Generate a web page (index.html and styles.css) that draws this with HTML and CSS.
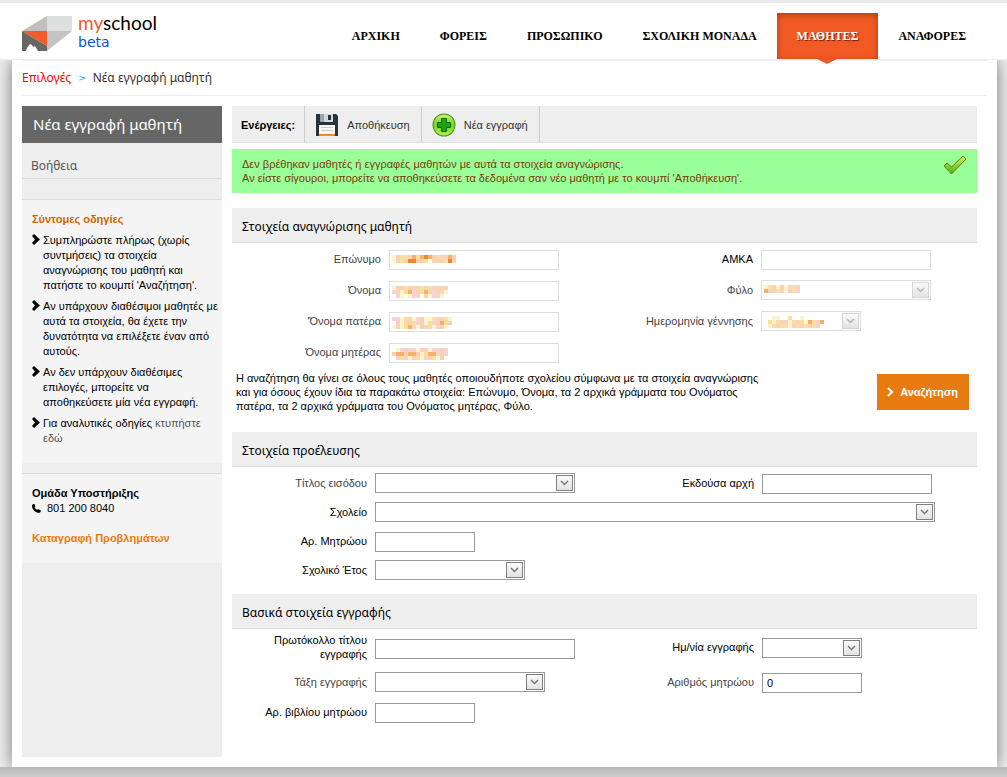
FILE: index.html
```html
<!DOCTYPE html>
<html lang="el">
<head>
<meta charset="utf-8">
<title>myschool – Νέα εγγραφή μαθητή</title>
<link rel="stylesheet" href="styles.css">
</head>
<body>
<svg class="defs" aria-hidden="true">
  <symbol id="chevron" viewBox="0 0 15 14"><path fill="none" stroke="currentColor" stroke-width="1.500" d="M4 5l3.500 3.500L11 5"/></symbol>
  <symbol id="arrow" viewBox="0 0 8 11"><path d="M0 2l2-2 6 5.500-6 5.500-2-2 3-3.500z"/></symbol>
  <symbol id="thin-arrow" viewBox="0 0 7 10"><path fill="none" stroke="currentColor" stroke-width="2" d="M1 1l4 4-4 4"/></symbol>
</svg>

<header class="top">
  <a class="logo" href="#" aria-label="myschool beta">
    <svg class="logo-mark" viewBox="0 0 50 36" aria-hidden="true">
      <path fill="#dedfdf" d="M25 0h25v15H25z"/>
      <path fill="#bdbebd" d="M0 15L25 0v15z"/>
      <path fill="#c2c3c2" d="M25 15h25L25 35z"/>
      <path fill="#f15a29" d="M0 15h25v15z"/>
      <path fill="#666" d="M0 15l25 15v5H0z"/>
      <path fill="#fff" d="M4 35l1-3 3-4 2 1 1 2 2-1 3 5z"/>
    </svg>
    <span class="logo-text"><span class="logo-name"><b>my</b>school</span><span class="logo-beta">beta</span></span>
  </a>
  <nav class="nav">
    <a href="#">ΑΡΧΙΚΗ</a>
    <a href="#">ΦΟΡΕΙΣ</a>
    <a href="#">ΠΡΟΣΩΠΙΚΟ</a>
    <a href="#">ΣΧΟΛΙΚΗ ΜΟΝΑΔΑ</a>
    <a href="#" class="active">ΜΑΘΗΤΕΣ</a>
    <a href="#">ΑΝΑΦΟΡΕΣ</a>
  </nav>
</header>

<div class="page">
  <nav class="crumbs"><a href="#">Επιλογές</a><i>&gt;</i><span>Νέα εγγραφή μαθητή</span></nav>
  <div class="columns">
    <aside class="side">
      <h1>Νέα εγγραφή μαθητή</h1>
      <a class="help" href="#">Βοήθεια</a>
      <div class="spacer"></div>
      <section class="tips">
        <h2>Σύντομες οδηγίες</h2>
        <ul>
          <li><svg><use href="#arrow"/></svg><span>Συμπληρώστε πλήρως (χωρίς συντμήσεις) τα στοιχεία αναγνώρισης του μαθητή και πατήστε το κουμπί 'Αναζήτηση'.</span></li>
          <li><svg><use href="#arrow"/></svg><span>Αν υπάρχουν διαθέσιμοι μαθητές με αυτά τα στοιχεία, θα έχετε την δυνατότητα να επιλέξετε έναν από αυτούς.</span></li>
          <li><svg><use href="#arrow"/></svg><span>Αν δεν υπάρχουν διαθέσιμες επιλογές, μπορείτε να αποθηκεύσετε μία νέα εγγραφή.</span></li>
          <li><svg><use href="#arrow"/></svg><span>Για αναλυτικές οδηγίες <a href="#">κτυπήστε εδώ</a></span></li>
        </ul>
      </section>
      <section class="support">
        <h2>Ομάδα Υποστήριξης</h2>
        <p><svg viewBox="0 0 9 9" aria-hidden="true"><path d="M1 0l1.500 0 1 2.500-1 1 2.500 2.500 1-1 3 1.500-.5 1.500-1.500 1C3.500 9 0 5.500 0 1.500z"/></svg>801 200 8040</p>
        <a href="#">Καταγραφή Προβλημάτων</a>
      </section>
    </aside>

    <main class="main">
      <div class="toolbar">
        <strong>Ενέργειες:</strong>
        <button type="button">
          <svg viewBox="0 0 24 24" aria-hidden="true">
            <path fill="#27343a" d="M1 1h20l2 2v20H1z"/>
            <path fill="#d5d8da" d="M5 1h13v8H5z"/><path fill="#9fa5a8" d="M5 1h4v8H5z"/>
            <path fill="#27343a" d="M13 2h3v5h-3z"/>
            <path fill="#f7f7f7" d="M4 12h16v9H4z"/><path fill="#f08a24" d="M4 21h16v2H4z"/>
            <path stroke="#c9cdd0" d="M6 14.500h12M6 17.500h12"/>
          </svg>Αποθήκευση
        </button>
        <button type="button">
          <svg viewBox="0 0 24 24" aria-hidden="true">
            <defs><linearGradient id="g" x2="0" y2="1"><stop stop-color="#c8f26a"/><stop offset=".5" stop-color="#74d02c"/><stop offset="1" stop-color="#b4ee4c"/></linearGradient></defs>
            <circle cx="12" cy="12" r="11.500" fill="#3f9a1c"/><circle cx="12" cy="12" r="10.500" fill="url(#g)"/>
            <path fill="#1fa312" stroke="#0a6d08" d="M9.500 5.500h5v4h4v5h-4v4h-5v-4h-4v-5h4z"/>
          </svg>Νέα εγγραφή
        </button>
      </div>

      <div class="message" role="status">
        <p>Δεν βρέθηκαν μαθητές ή εγγραφές μαθητών με αυτά τα στοιχεία αναγνώρισης.<br>Αν είστε σίγουροι, μπορείτε να αποθηκεύσετε τα δεδομένα σαν νέο μαθητή με το κουμπί 'Αποθήκευση'.</p>
        <svg viewBox="0 0 24 20" aria-hidden="true">
          <defs><linearGradient id="t" x2="0" y2="1"><stop stop-color="#e2f04a"/><stop offset="1" stop-color="#4fae14"/></linearGradient></defs>
          <path fill="url(#t)" stroke="#4c8a12" d="M1 11l3-3 4.500 4L20 1l3 3L8.500 19z"/>
        </svg>
      </div>

      <section>
        <h2 class="section-head">Στοιχεία αναγνώρισης μαθητή</h2>
        <div class="form form-id">
          <label for="lastname">Επώνυμο</label>
          <div class="field w170"><input id="lastname" disabled><svg class="mosaic" data-rows="cpyypoyoOopyppop|cpypOOppywpppyOp"></svg></div>
          <label for="amka" class="dark">ΑΜΚΑ</label>
          <div class="field w170"><input id="amka" disabled></div>

          <label for="firstname">Όνομα</label>
          <div class="field w170"><input id="firstname" disabled><svg class="mosaic" data-rows="cppypppypypppp|rpcyorpyoprpyc|wrcwcrrwpcrrcw"></svg></div>
          <label for="gender">Φύλο</label>
          <div class="combo w170"><select id="gender" disabled></select><svg class="btn"><use href="#chevron"/></svg><svg class="mosaic" data-rows="cypcpcryr|oppypcpyr"></svg></div>

          <label for="father">'Όνομα πατέρα</label>
          <div class="field w170"><input id="father" disabled><svg class="mosaic" data-rows="rrcypcrpccyrpyc|wpcypyrpcyrpoyp|crcyorcprycrpcw"></svg></div>
          <label for="birth">Ημερομηνία γέννησης</label>
          <div class="combo w100"><input id="birth" disabled><svg class="btn"><use href="#chevron"/></svg><svg class="mosaic" data-rows="wwccwwywwcwwwww|wycyprcypycoyro|wcypyycpypypypw"></svg></div>

          <label for="mother">Όνομα μητέρας</label>
          <div class="field w170"><input id="mother" disabled><svg class="mosaic" data-rows="wcrprrcppcrrpr|poopoopcyoorpr|wrypcpycrpycpw"></svg></div>
        </div>
        <div class="search">
          <p>Η αναζήτηση θα γίνει σε όλους τους μαθητές οποιουδήποτε σχολείου σύμφωνα με τα στοιχεία αναγνώρισης και για όσους έχουν ίδια τα παρακάτω στοιχεία: Επώνυμο, Όνομα, τα 2 αρχικά γράμματα του Ονόματος πατέρα, τα 2 αρχικά γράμματα του Ονόματος μητέρας, Φύλο.</p>
          <button type="button"><svg aria-hidden="true"><use href="#thin-arrow"/></svg>Αναζήτηση</button>
        </div>
      </section>

      <section>
        <h2 class="section-head">Στοιχεία προέλευσης</h2>
        <div class="form form-origin">
          <label for="title">Τίτλος εισόδου</label>
          <div class="combo w200"><select id="title"></select><svg class="btn"><use href="#chevron"/></svg></div>
          <label for="authority" class="dark">Εκδούσα αρχή</label>
          <div class="field w170"><input id="authority"></div>

          <label for="school" class="dark">Σχολείο</label>
          <div class="combo wide"><select id="school"></select><svg class="btn"><use href="#chevron"/></svg></div>

          <label for="regno" class="dark">Αρ. Μητρώου</label>
          <div class="field w100 rest"><input id="regno"></div>

          <label for="year" class="dark">Σχολικό Έτος</label>
          <div class="combo w150 rest"><select id="year"></select><svg class="btn"><use href="#chevron"/></svg></div>
        </div>
      </section>

      <section>
        <h2 class="section-head">Βασικά στοιχεία εγγραφής</h2>
        <div class="form form-basic">
          <label for="protocol" class="dark">Πρωτόκολλο τίτλου εγγραφής</label>
          <div class="field w200"><input id="protocol"></div>
          <label for="regdate" class="dark">Ημ/νία εγγραφής</label>
          <div class="combo w100"><input id="regdate"><svg class="btn"><use href="#chevron"/></svg></div>

          <label for="grade">Τάξη εγγραφής</label>
          <div class="combo w170"><select id="grade"></select><svg class="btn"><use href="#chevron"/></svg></div>
          <label for="number">Αριθμός μητρώου</label>
          <div class="field w100"><input id="number" value="0"></div>

          <label for="book" class="dark">Αρ. βιβλίου μητρώου</label>
          <div class="field w100"><input id="book"></div>
        </div>
      </section>
    </main>
  </div>
</div>
<footer class="foot"></footer>
<script src="mosaic.js"></script>
</body>
</html>
```
FILE: styles.css
```css
* { box-sizing: border-box; }
body {
  margin: 0;
  min-height: 100vh;
  display: flex;
  flex-direction: column;
  background: #eee;
  color: #000;
  font: 11px/14px "Liberation Sans", Arial, sans-serif;
}
h1, h2, p, ul { margin: 0; padding: 0; }
a { color: inherit; text-decoration: none; }
button, input, select { font: inherit; color: inherit; }
.defs { position: absolute; width: 0; height: 0; }

.top {
  position: relative;
  z-index: 2;
  display: flex;
  justify-content: space-between;
  height: 60px;
  padding: 10px 21px 0 22px;
  background: #fff;
  border-top: 3px solid #e8e8e8;
  border-bottom: 1px solid #ededed;
}
.logo { display: flex; gap: 6px; }
.logo-mark { width: 50px; height: 36px; margin-top: 3px; }
.logo-text { display: flex; flex-direction: column; }
.logo-name { font: 19px/19px Lato, sans-serif; }
.logo-name b { font-weight: 400; color: #f15a29; }
.logo-beta { font: 14px/21px "DejaVu Sans", sans-serif; color: #0b4fe0; }

.nav { display: flex; }
.nav a {
  position: relative;
  padding: 0 20px;
  font: bold 12px/46px "Liberation Serif", serif;
}
.nav .active {
  color: #fff;
  background: #f15a24;
  box-shadow: inset 0 2px 6px #b03c12;
  text-shadow: 1px 1px 1px #6b2108;
}
.nav .active::after {
  content: "";
  position: absolute;
  left: calc(50% - 10px);
  top: 100%;
  border: 10px solid transparent;
  border-top: 5px solid #f15a24;
  border-bottom: 0;
}

.page {
  flex: 1;
  display: flex;
  flex-direction: column;
  margin: 0 10px 0 12px;
  padding: 0 10px 10px;
  background: #fff;
  box-shadow: 0 0 16px #777;
}
.crumbs {
  display: flex;
  gap: 7px;
  height: 36px;
  border-top: 1px solid #ededed;
  border-bottom: 1px solid #ededed;
  font: 12px/34px "Noto Sans", sans-serif;
  color: #333;
}
.crumbs a { color: #f00; }
.crumbs i { font: 9px/34px "DejaVu Sans", sans-serif; color: #1a9bea; }

.columns {
  flex: 1;
  display: grid;
  grid-template-columns: 200px minmax(0, 1fr);
  gap: 10px;
  padding: 10px 10px 0 0;
}

.side { background: #eee; }
.side h1 { padding: 0 11px; background: #666; color: #fff; font: 15px/37px "Noto Sans", sans-serif; }
.help {
  display: block;
  height: 36px;
  padding: 10px 9px 0;
  border-bottom: 1px solid #ddd;
  font: 12px/25px "Noto Sans", sans-serif;
  color: #555;
}
.spacer { height: 21px; border-bottom: 1px solid #ddd; }
.side section { background: #f4f4f4; line-height: 15px; }
.side section h2 { font-size: 11px; line-height: 15px; }
.tips { padding: 12px 4px 17px 10px; }
.tips h2 { color: #cc6600; margin-bottom: 6px; }
.tips li { display: flex; gap: 3px; margin-bottom: 6px; }
.tips li:last-child { margin-bottom: 0; }
.tips svg { flex: none; width: 8px; height: 11px; margin-top: 1px; }
.tips a { color: #555; }
.side .support { margin-top: 10px; padding: 12px 10px 17px; border-top: 1px solid #ddd; }
.support p { display: flex; align-items: center; gap: 6px; margin-bottom: 15px; }
.support svg { width: 9px; height: 9px; }
.support a { font-weight: bold; color: #e87b10; }

.toolbar { display: flex; height: 37px; background: #eee; border-bottom: 1px solid #ddd; }
.toolbar strong { padding: 0 9px; line-height: 38px; }
.toolbar button {
  display: flex;
  align-items: center;
  gap: 8px;
  padding: 2px 11px 0 10px;
  border: 0;
  border-left: 1px solid #ccc;
  background: none;
  color: #333;
}
.toolbar button:last-child { border-right: 1px solid #ccc; }
.toolbar svg { width: 24px; height: 24px; }

.message {
  display: flex;
  justify-content: space-between;
  margin: 6px 0 15px;
  padding: 8px 10px;
  background: #99ff99;
  color: #7a3b0a;
}
.message svg { width: 24px; height: 20px; margin-top: -2px; }

.section-head {
  padding: 3px 10px 0;
  background: #eee;
  border-bottom: 1px solid #ddd;
  font: 12px/31px "Noto Sans", sans-serif;
}
.form { display: grid; align-items: center; column-gap: 8px; }
.form-id { grid-template-columns: 149px minmax(0, 1fr) 130px 216px; row-gap: 10px; padding: 6px 0 8px; }
.form-origin { grid-template-columns: 135px minmax(0, 1fr) 130px 215px; row-gap: 8px; padding: 6px 0 13px; }
.form-basic { grid-template-columns: 135px minmax(0, 1fr) 130px 215px; row-gap: 9px; padding: 4px 0 10px; }
.form label { padding-bottom: 2px; text-align: right; color: #444; }
.form .dark { color: #000; }

.field, .combo { position: relative; display: flex; height: 20px; background: #fff; border: 1px solid #999; }
.field { margin-top: 1px; }
.combo { margin-bottom: 1px; }
.field input, .combo input, .combo select {
  flex: 1;
  min-width: 0;
  padding: 0 4px;
  border: 0;
  background: none;
  outline: 0;
  appearance: none;
}
.combo .btn {
  position: absolute;
  top: 1px;
  right: 1px;
  width: 17px;
  height: 16px;
  border: 1px solid #808080;
  background: linear-gradient(#fafafa, #e2e2e2);
  color: #777;
  pointer-events: none;
}
.field:has(:disabled), .combo:has(:disabled) { border-color: #ddd; }
.combo:has(:disabled) .btn { border-color: #d4d4d4; color: #b5b5b5; }
.w100 { width: 100px; }
.w150 { width: 150px; }
.w170 { width: 170px; }
.w200 { width: 200px; }
.wide { grid-column: 2 / -1; margin-right: 42px; }
.rest { grid-column: 2 / -1; }
.mosaic { position: absolute; left: 2px; top: 4px; }

.search { display: flex; justify-content: space-between; padding: 0 8px 19px 4px; }
.search p { max-width: 530px; }
.search button {
  display: flex;
  align-items: center;
  gap: 6px;
  height: 36px;
  margin-top: 3px;
  padding: 0 11px 0 10px;
  border: 0;
  background: #e87b10;
  color: #fff;
  font-weight: bold;
}
.search svg { width: 7px; height: 10px; }

.foot { position: relative; height: 10px; background: linear-gradient(#b8b8b8, #ccc); }
```
FILE: mosaic.js
```javascript
// Fills each masked value with 4px colour cells, one letter per cell.
const palette = {
  c: '#fdf3d0', p: '#f7d2b8', y: '#fadf9c', o: '#f5b06a',
  O: '#ee8434', r: '#f6d3d3', w: 'none'
};
document.querySelectorAll('.mosaic').forEach(svg => {
  const rows = svg.dataset.rows.split('|');
  svg.setAttribute('width', rows[0].length * 4);
  svg.setAttribute('height', rows.length * 4);
  svg.innerHTML = rows.map((row, y) => [...row].map((cell, x) =>
    `<rect x="${x * 4}" y="${y * 4}" width="4" height="4" fill="${palette[cell]}"/>`).join('')).join('');
});
```
